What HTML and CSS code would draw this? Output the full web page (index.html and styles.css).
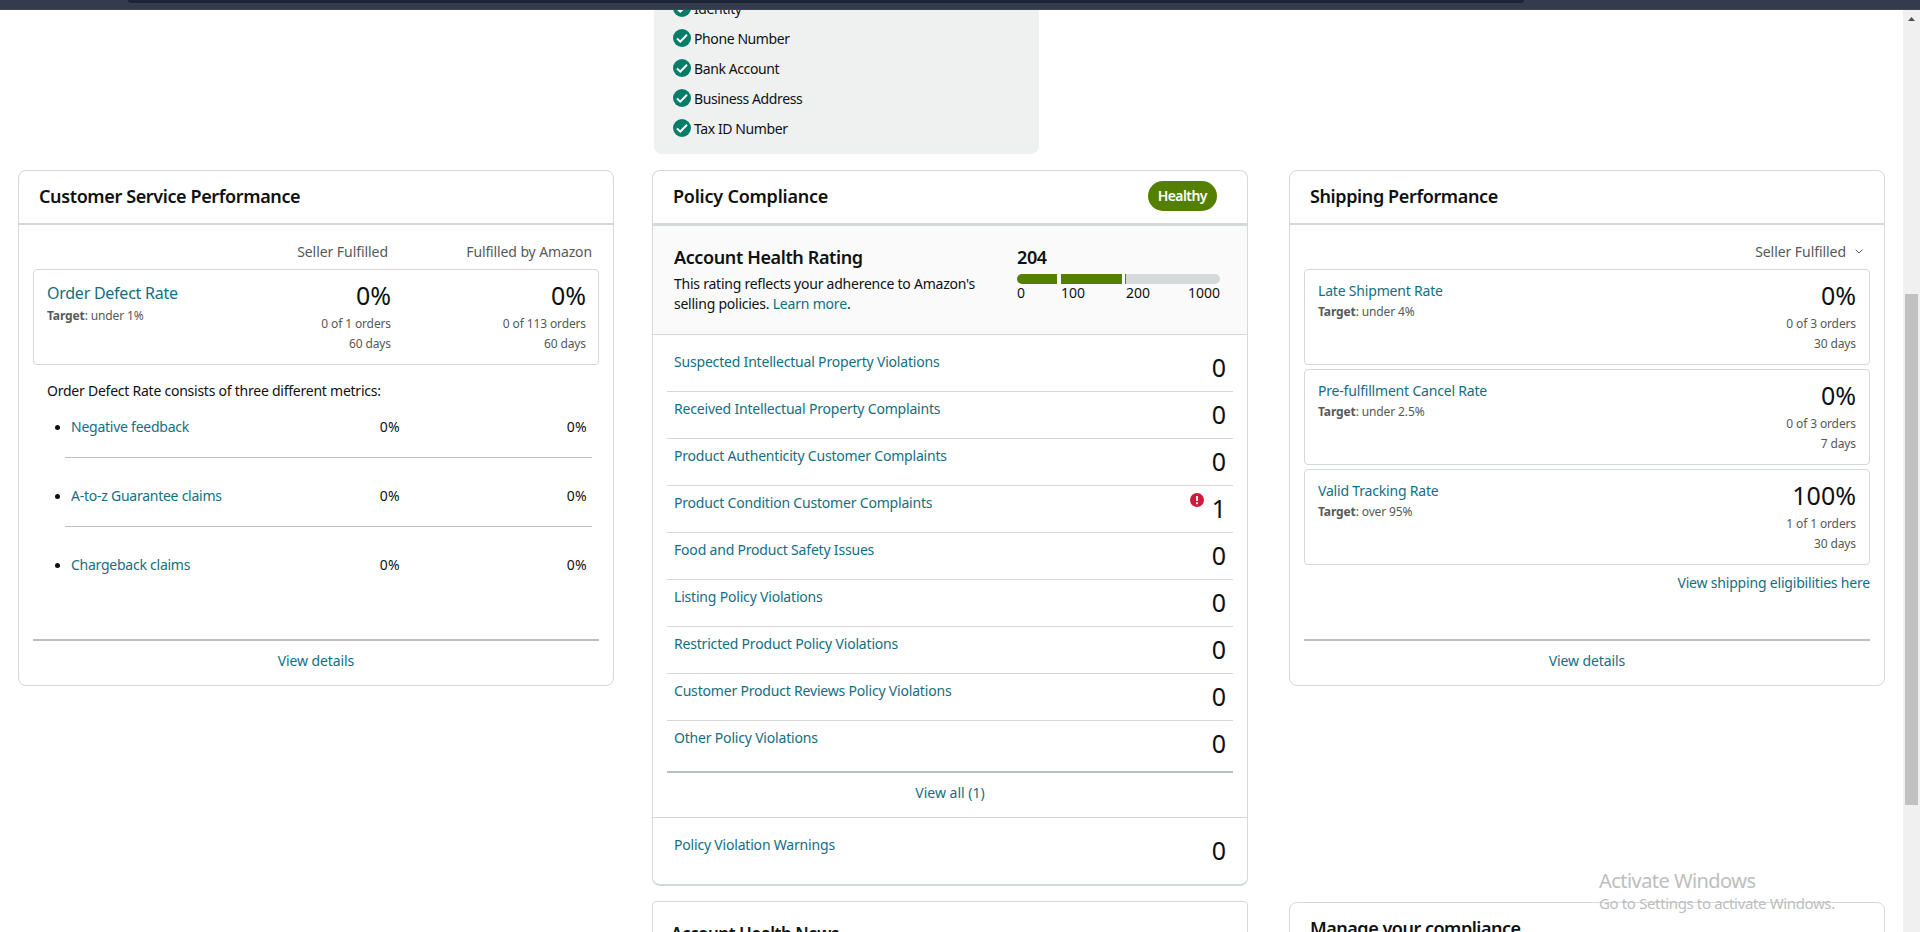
FILE: index.html
```html
<!DOCTYPE html>
<html lang="en">
<head>
<meta charset="utf-8">
<title>Account Health</title>
<link rel="stylesheet" href="styles.css">
</head>
<body>
<svg class="defs" width="0" height="0">
  <symbol id="check" viewBox="0 0 18 18"><circle cx="9" cy="9" r="9" fill="#067d68"/><path d="M4 9.5l3.3 3.2 6.7-7" fill="none" stroke="#fff" stroke-width="2"/></symbol>
</svg>
<div class="browser-edge"><div class="address-bar"></div></div>
<div class="viewport">
  <main class="content">
    <ul class="verified">
      <li><svg class="check"><use href="#check"/></svg><span>Identity</span></li>
      <li><svg class="check"><use href="#check"/></svg><span>Phone Number</span></li>
      <li><svg class="check"><use href="#check"/></svg><span>Bank Account</span></li>
      <li><svg class="check"><use href="#check"/></svg><span>Business Address</span></li>
      <li><svg class="check"><use href="#check"/></svg><span>Tax ID Number</span></li>
    </ul>
    <div class="columns">
      <div class="column">
        <section class="card tall">
          <header class="card-head"><h2>Customer Service Performance</h2></header>
          <div class="card-body">
            <div class="col-heads"><span>Seller Fulfilled</span><span class="head-fba">Fulfilled by Amazon</span></div>
            <div class="metric">
              <div class="metric-name big-name"><a>Order Defect Rate</a><p><b>Target</b>: under 1%</p></div>
              <div class="metric-value"><strong>0%</strong><span>0 of 1 orders</span><span>60 days</span></div>
              <div class="metric-value value-fba"><strong>0%</strong><span>0 of 113 orders</span><span>60 days</span></div>
            </div>
            <p class="explain">Order Defect Rate consists of three different metrics:</p>
            <ul class="sub-metrics">
              <li><a>Negative feedback</a><span>0%</span><span>0%</span></li>
              <li><a>A-to-z Guarantee claims</a><span>0%</span><span>0%</span></li>
              <li><a>Chargeback claims</a><span>0%</span><span>0%</span></li>
            </ul>
            <footer class="card-foot"><a>View details</a></footer>
          </div>
        </section>
      </div>
      <div class="column">
        <section class="card policy">
          <header class="card-head"><h2>Policy Compliance</h2><span class="pill">Healthy</span></header>
          <div class="rating">
            <div class="rating-text">
              <h3>Account Health Rating</h3>
              <p>This rating reflects your adherence to Amazon's<br>selling policies. <a>Learn more</a>.</p>
            </div>
            <div class="rating-score">
              <h3>204</h3>
              <div class="bar"><i class="seg-a"></i><i class="seg-b"></i><i class="seg-c"></i></div>
              <div class="scale"><span class="s-a">0</span><span class="s-b">100</span><span class="s-c">200</span><span>1000</span></div>
            </div>
          </div>
          <ul class="violations">
            <li><a>Suspected Intellectual Property Violations</a><span>0</span></li>
            <li><a>Received Intellectual Property Complaints</a><span>0</span></li>
            <li><a>Product Authenticity Customer Complaints</a><span>0</span></li>
            <li><a>Product Condition Customer Complaints</a><svg class="alert" viewBox="0 0 14 14"><circle cx="7" cy="7" r="7" fill="#cc1c39"/><path d="M7 3v5M7 9.3v1.9" stroke="#fff" stroke-width="1.8"/></svg><span>1</span></li>
            <li><a>Food and Product Safety Issues</a><span>0</span></li>
            <li><a>Listing Policy Violations</a><span>0</span></li>
            <li><a>Restricted Product Policy Violations</a><span>0</span></li>
            <li><a>Customer Product Reviews Policy Violations</a><span>0</span></li>
            <li><a>Other Policy Violations</a><span>0</span></li>
          </ul>
          <div class="view-all"><a>View all (1)</a></div>
          <div class="warnings"><a>Policy Violation Warnings</a><span>0</span></div>
        </section>
        <section class="card news"><header><h2>Account Health News</h2></header></section>
      </div>
      <div class="column">
        <section class="card tall">
          <header class="card-head"><h2>Shipping Performance</h2></header>
          <div class="card-body">
            <div class="col-heads picker"><span>Seller Fulfilled</span><svg class="chevron" viewBox="0 0 8 5"><path d="M.7.7L4 4 7.3.7" fill="none" stroke="#565959"/></svg></div>
            <div class="metric">
              <div class="metric-name"><a>Late Shipment Rate</a><p><b>Target</b>: under 4%</p></div>
              <div class="metric-value"><strong>0%</strong><span>0 of 3 orders</span><span>30 days</span></div>
            </div>
            <div class="metric">
              <div class="metric-name"><a>Pre-fulfillment Cancel Rate</a><p><b>Target</b>: under 2.5%</p></div>
              <div class="metric-value"><strong>0%</strong><span>0 of 3 orders</span><span>7 days</span></div>
            </div>
            <div class="metric">
              <div class="metric-name"><a>Valid Tracking Rate</a><p><b>Target</b>: over 95%</p></div>
              <div class="metric-value"><strong>100%</strong><span>1 of 1 orders</span><span>30 days</span></div>
            </div>
            <a class="eligibility">View shipping eligibilities here</a>
            <footer class="card-foot"><a>View details</a></footer>
          </div>
        </section>
        <section class="card compliance"><header class="card-head"><h2>Manage your compliance</h2></header></section>
      </div>
    </div>
  </main>
  <div class="scrollbar"><svg class="scroll-up" viewBox="0 0 7 4"><path d="M0 4L3.5 0 7 4z" fill="#505050"/></svg><div class="thumb"></div></div>
</div>
<div class="watermark"><p class="wm-title">Activate Windows</p><p class="wm-text">Go to Settings to activate Windows.</p></div>
</body>
</html>
```
FILE: styles.css
```css
* { box-sizing: border-box; margin: 0; padding: 0; }
body {
  height: 932px;
  overflow: hidden;
  background: #fff;
  color: #0f1111;
  font: 14px/20px "Noto Sans", "Open Sans", sans-serif;
  letter-spacing: -0.24px;
}
ul { list-style: none; }
a { color: #146e82; letter-spacing: -0.19px; }
h2, h3 { font-size: 18px; line-height: 24px; font-weight: 600; letter-spacing: -0.38px; }
.defs { display: block; height: 0; }

.browser-edge { height: 10px; background: #333c4d; border-bottom: 1px solid #45484f; }
.address-bar { width: 1396px; height: 3px; margin-left: 128px; background: #1c2535; border-radius: 0 0 14px 14px; }
.viewport { display: flex; height: 922px; overflow: hidden; }
.content { flex: 1; height: 922px; overflow: hidden; }

.verified {
  display: flex;
  flex-direction: column;
  justify-content: flex-end;
  width: 385px;
  height: 144px;
  margin: 0 0 16px 654px;
  padding: 0 19px 11px;
  background: #eff1f1;
  border-radius: 0 0 8px 8px;
  overflow: hidden;
  letter-spacing: -0.4px;
}
.verified li { display: flex; flex: none; align-items: center; gap: 3px; height: 30px; }
.verified span { padding-top: 2px; }
.check { width: 18px; height: 18px; }

.columns { display: flex; padding-left: 18px; }
.column { display: flex; flex-direction: column; gap: 15px; width: 596px; margin-right: 38px; }
.column:nth-child(2) { margin-right: 41px; }
.column:last-child { margin-right: 0; gap: 216px; }
.card { flex: none; border: 1px solid #d5d9d9; border-radius: 8px; background: #fff; }
.tall { display: flex; flex-direction: column; height: 516px; }
.card-head {
  display: flex;
  align-items: center;
  justify-content: space-between;
  height: 54px;
  padding: 0 30px 3px 20px;
  border-bottom: 2px solid #d5d9d9;
}
.card-body { display: flex; flex: 1; flex-direction: column; padding: 0 14px; }

.col-heads { display: flex; justify-content: flex-end; height: 44px; padding: 17px 7px 0 0; color: #565959; letter-spacing: -0.06px; }
.head-fba { width: 204px; text-align: right; letter-spacing: -0.12px; }
.picker { gap: 9px; padding-right: 7px; }
.chevron { width: 8px; height: 5px; margin-top: 7px; }

.metric { display: flex; flex: none; height: 96px; margin-bottom: 4px; padding: 14px 13px 0; border: 1px solid #d5d9d9; border-radius: 4px; }
.metric-name { flex: 1; color: #565959; font-size: 12px; letter-spacing: -0.12px; }
.metric-name a { display: block; height: 18px; font-size: 14px; line-height: 14px; }
.big-name a { height: 22px; font-size: 16px; line-height: 18px; letter-spacing: -0.25px; }
.metric-value { display: flex; flex-direction: column; align-items: flex-end; color: #565959; font-size: 12px; letter-spacing: -0.12px; }
.metric-value strong { height: 30px; color: #0f1111; font-size: 25px; line-height: 23px; font-weight: 400; letter-spacing: 0; }
.big-name ~ .metric-value { margin-right: -1px; }
.big-name ~ .value-fba { width: 196px; }

.explain { padding: 12px 14px 0; }
.sub-metrics { padding: 0 7px 0 32px; }
.sub-metrics li { display: grid; grid-template-columns: 1fr 100px 187px; align-items: start; height: 69px; padding: 28px 5px 0 6px; text-align: right; }
.sub-metrics li:first-child { height: 56px; padding-top: 16px; }
.sub-metrics li + li { border-top: 1px solid #bbbfbf; }
.sub-metrics a { display: flex; align-items: center; text-align: left; letter-spacing: -0.25px; }
.sub-metrics span { letter-spacing: 0.3px; }
.sub-metrics a::before { content: ""; width: 5px; height: 5px; margin: 0 11px 0 -16px; border-radius: 50%; background: #0f1111; }

.card-foot { height: 46px; margin-top: auto; padding-top: 10px; border-top: 2px solid #bbbfbf; text-align: center; }
.card-foot a { letter-spacing: -0.1px; }
.eligibility { padding-top: 4px; text-align: right; }

.policy { height: 716px; border-bottom-width: 2px; }
.policy .card-head { height: 55px; border-bottom-width: 3px; }
.policy h2 { letter-spacing: -0.22px; }
.pill { height: 30px; margin-top: 1px; padding: 0 10px; border-radius: 15px; background: #538000; color: #fff; font-weight: 600; line-height: 30px; letter-spacing: -0.55px; }
.rating { display: flex; justify-content: space-between; height: 109px; padding: 19px 27px 0 21px; border-bottom: 1px solid #d5d9d9; background: #fafafa; }
.rating p { margin-top: 5px; }
.rating-score { width: 203px; }
.bar { display: flex; gap: 4px; height: 10px; margin-top: 5px; overflow: hidden; border-radius: 5px; background: linear-gradient(90deg, #fff 109px, #d5d9d9 109px); }
.bar i { background: #538000; }
.seg-a { width: 40px; }
.seg-b { width: 61px; }
.seg-c { width: 1px; margin-left: -1px; }
.scale { display: flex; justify-content: space-between; letter-spacing: 0; line-height: 18px; }
.s-a { width: 44px; }
.s-b { width: 65px; }
.s-c { width: 32px; margin-right: auto; }

.violations { padding: 10px 14px 0; }
.violations li { display: flex; height: 47px; padding: 7px 7px 0; border-bottom: 1px solid #d5d9d9; }
.violations li:last-child { height: 52px; border-bottom: 2px solid #bbbfbf; }
.violations a, .warnings a { flex: 1; }
.violations span, .warnings span { font-size: 25px; line-height: 30px; letter-spacing: 0; }
.alert { width: 14px; height: 14px; margin: 0 8px 0 0; }
.view-all { height: 45px; padding-top: 10px; border-bottom: 1px solid #d5d9d9; text-align: center; }
.view-all a { letter-spacing: 0; }
.warnings { display: flex; padding: 17px 21px 0; }

.news { height: 80px; padding: 20px 18px; border-radius: 4px; }
.news h2 { font-size: 17px; letter-spacing: -0.5px; }
.compliance { height: 80px; }
.compliance h2 { letter-spacing: -0.48px; }

.scrollbar { display: flex; flex-direction: column; align-items: center; width: 17px; background: #f0f0f0; }
.scroll-up { width: 7px; height: 4px; margin-top: 7px; }
.thumb { width: 13px; height: 511px; margin-top: 273px; background: #c1c1c1; }

/* System notice floating above the page */
.watermark { position: absolute; left: 1599px; top: 868px; color: #bdbebe; white-space: nowrap; }
.wm-title { font-size: 20px; line-height: 26px; letter-spacing: -0.55px; }
.wm-text { font-size: 15px; line-height: 18px; letter-spacing: -0.36px; }
```
